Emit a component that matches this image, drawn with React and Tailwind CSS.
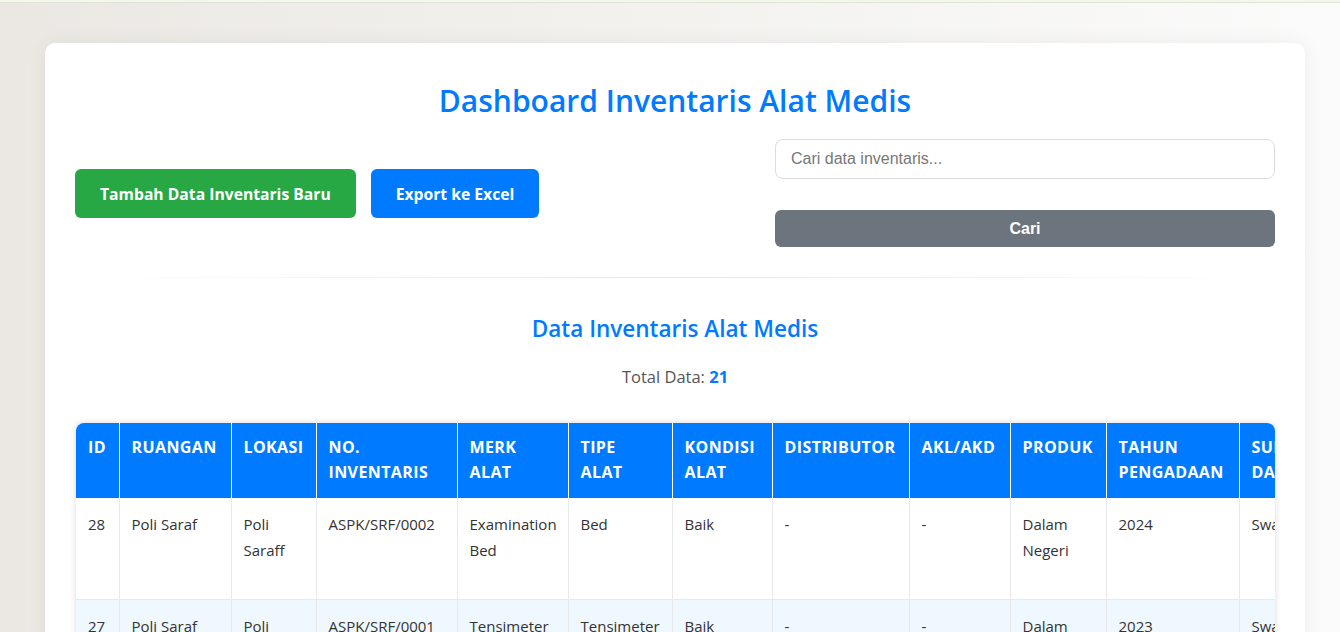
import React from "react";

const columns = [
  { label: "ID", w: 43 },
  { label: "RUANGAN", w: 112 },
  { label: "LOKASI", w: 85 },
  { label: "NO. INVENTARIS", w: 141 },
  { label: "MERK ALAT", w: 111 },
  { label: "TIPE ALAT", w: 104 },
  { label: "KONDISI ALAT", w: 100 },
  { label: "DISTRIBUTOR", w: 137 },
  { label: "AKL/AKD", w: 101 },
  { label: "PRODUK", w: 96 },
  { label: "TAHUN PENGADAAN", w: 133 },
  { label: "SUMBER DANA", w: 120 },
  { label: "KETERANGAN", w: 130 },
  { label: "AKSI", w: 110 },
];

const rows = [
  ["28", "Poli Saraf", "Poli Saraff", "ASPK/SRF/0002", "Examination Bed", "Bed", "Baik", "-", "-", "Dalam Negeri", "2024", "Swadana", "-", ""],
  ["27", "Poli Saraf", "Poli Saraff", "ASPK/SRF/0001", "Tensimeter", "Tensimeter", "Baik", "-", "-", "Dalam Negeri", "2023", "Swadana", "-", ""],
  ["26", "Poli Saraf", "Poli Saraff", "ASPK/SRF/0000", "Timbangan", "Digital", "Baik", "-", "-", "Dalam Negeri", "2023", "Swadana", "-", ""],
];

const font = { fontFamily: '"Segoe UI", "Open Sans", sans-serif' };

export default function App() {
  return (
    <div
      className="h-screen overflow-hidden bg-gradient-to-r from-[#ebe8e4] via-[#f3f2ef] to-[#fbfbfb]"
      style={font}
    >
      <div className="h-[3px] bg-[#f4f8ec] border-b border-[#dfe5d6]"></div>
      <div className="pl-[45px] pr-[35px] pt-[40px]">
        <div className="bg-white rounded-[10px] shadow-[0_0_20px_rgba(0,0,0,0.06)] px-[30px] pt-[30px] pb-10">
          <h1 className="text-center text-[30px] leading-[56px] text-[#007bff] font-semibold">
            Dashboard Inventaris Alat Medis
          </h1>

          <div className="flex items-center justify-between mt-[10px]">
            <div className="flex gap-[15px]">
              <button className="h-[49px] px-[25px] pt-[3px] rounded-[6px] bg-[#28a745] text-white font-bold text-[15.7px]">
                Tambah Data Inventaris Baru
              </button>
              <button className="h-[49px] px-[25px] pt-[3px] rounded-[6px] bg-[#007bff] text-white font-bold text-[15.7px]">
                Export ke Excel
              </button>
            </div>
            <form className="w-[500px] flex flex-col gap-[31px]" style={{ fontFamily: '"Liberation Sans", Arial, sans-serif' }}>
              <input
                type="text"
                placeholder="Cari data inventaris..."
                className="h-[40px] px-[15px] border border-[#dcdcdc] rounded-[8px] text-[16px] placeholder:text-[#777] outline-none"
              />
              <button
                type="button"
                className="h-[37px] rounded-[6px] bg-[#6c757d] text-white font-bold text-[16px]"
              >
                Cari
              </button>
            </form>
          </div>

          <div className="mt-[30px] h-px bg-gradient-to-r from-transparent via-[#e6e6e6] to-transparent"></div>

          <h2 className="mt-[36px] text-center text-[22.5px] leading-[30px] font-semibold text-[#007bff]">
            Data Inventaris Alat Medis
          </h2>
          <p className="mt-[21px] text-center text-[16.5px] text-[#555]">
            Total Data: <span className="font-bold text-[#007bff]">21</span>
          </p>

          <div className="mt-[33px] ml-px rounded-[8px] overflow-x-auto shadow-[0_0_6px_rgba(0,0,0,0.15)]">
            <table className="table-fixed border-collapse" style={{ width: columns.reduce((s, c) => s + c.w, 0) }}>
              <colgroup>
                {columns.map((c) => (
                  <col key={c.label} style={{ width: c.w }} />
                ))}
              </colgroup>
              <thead>
                <tr className="bg-[#007bff]">
                  {columns.map((c) => (
                    <th
                      key={c.label}
                      className="h-[75px] px-[12px] py-[12px] text-left align-top text-white font-bold text-[16px] leading-[25px] tracking-[0.4px] border-r border-white last:border-r-0"
                    >
                      {c.label}
                    </th>
                  ))}
                </tr>
              </thead>
              <tbody>
                {rows.map((r, i) => (
                  <tr key={i} className={i % 2 === 1 ? "bg-[#f0f8ff]" : "bg-white"}>
                    {r.map((v, j) => (
                      <td
                        key={j}
                        className="h-[102px] px-[12px] pt-[13px] align-top text-[15px] leading-[26px] text-[#333] border-r border-b border-[#e9e9e9] last:border-r-0"
                      >
                        {v}
                      </td>
                    ))}
                  </tr>
                ))}
              </tbody>
            </table>
          </div>
        </div>
      </div>
    </div>
  );
}
